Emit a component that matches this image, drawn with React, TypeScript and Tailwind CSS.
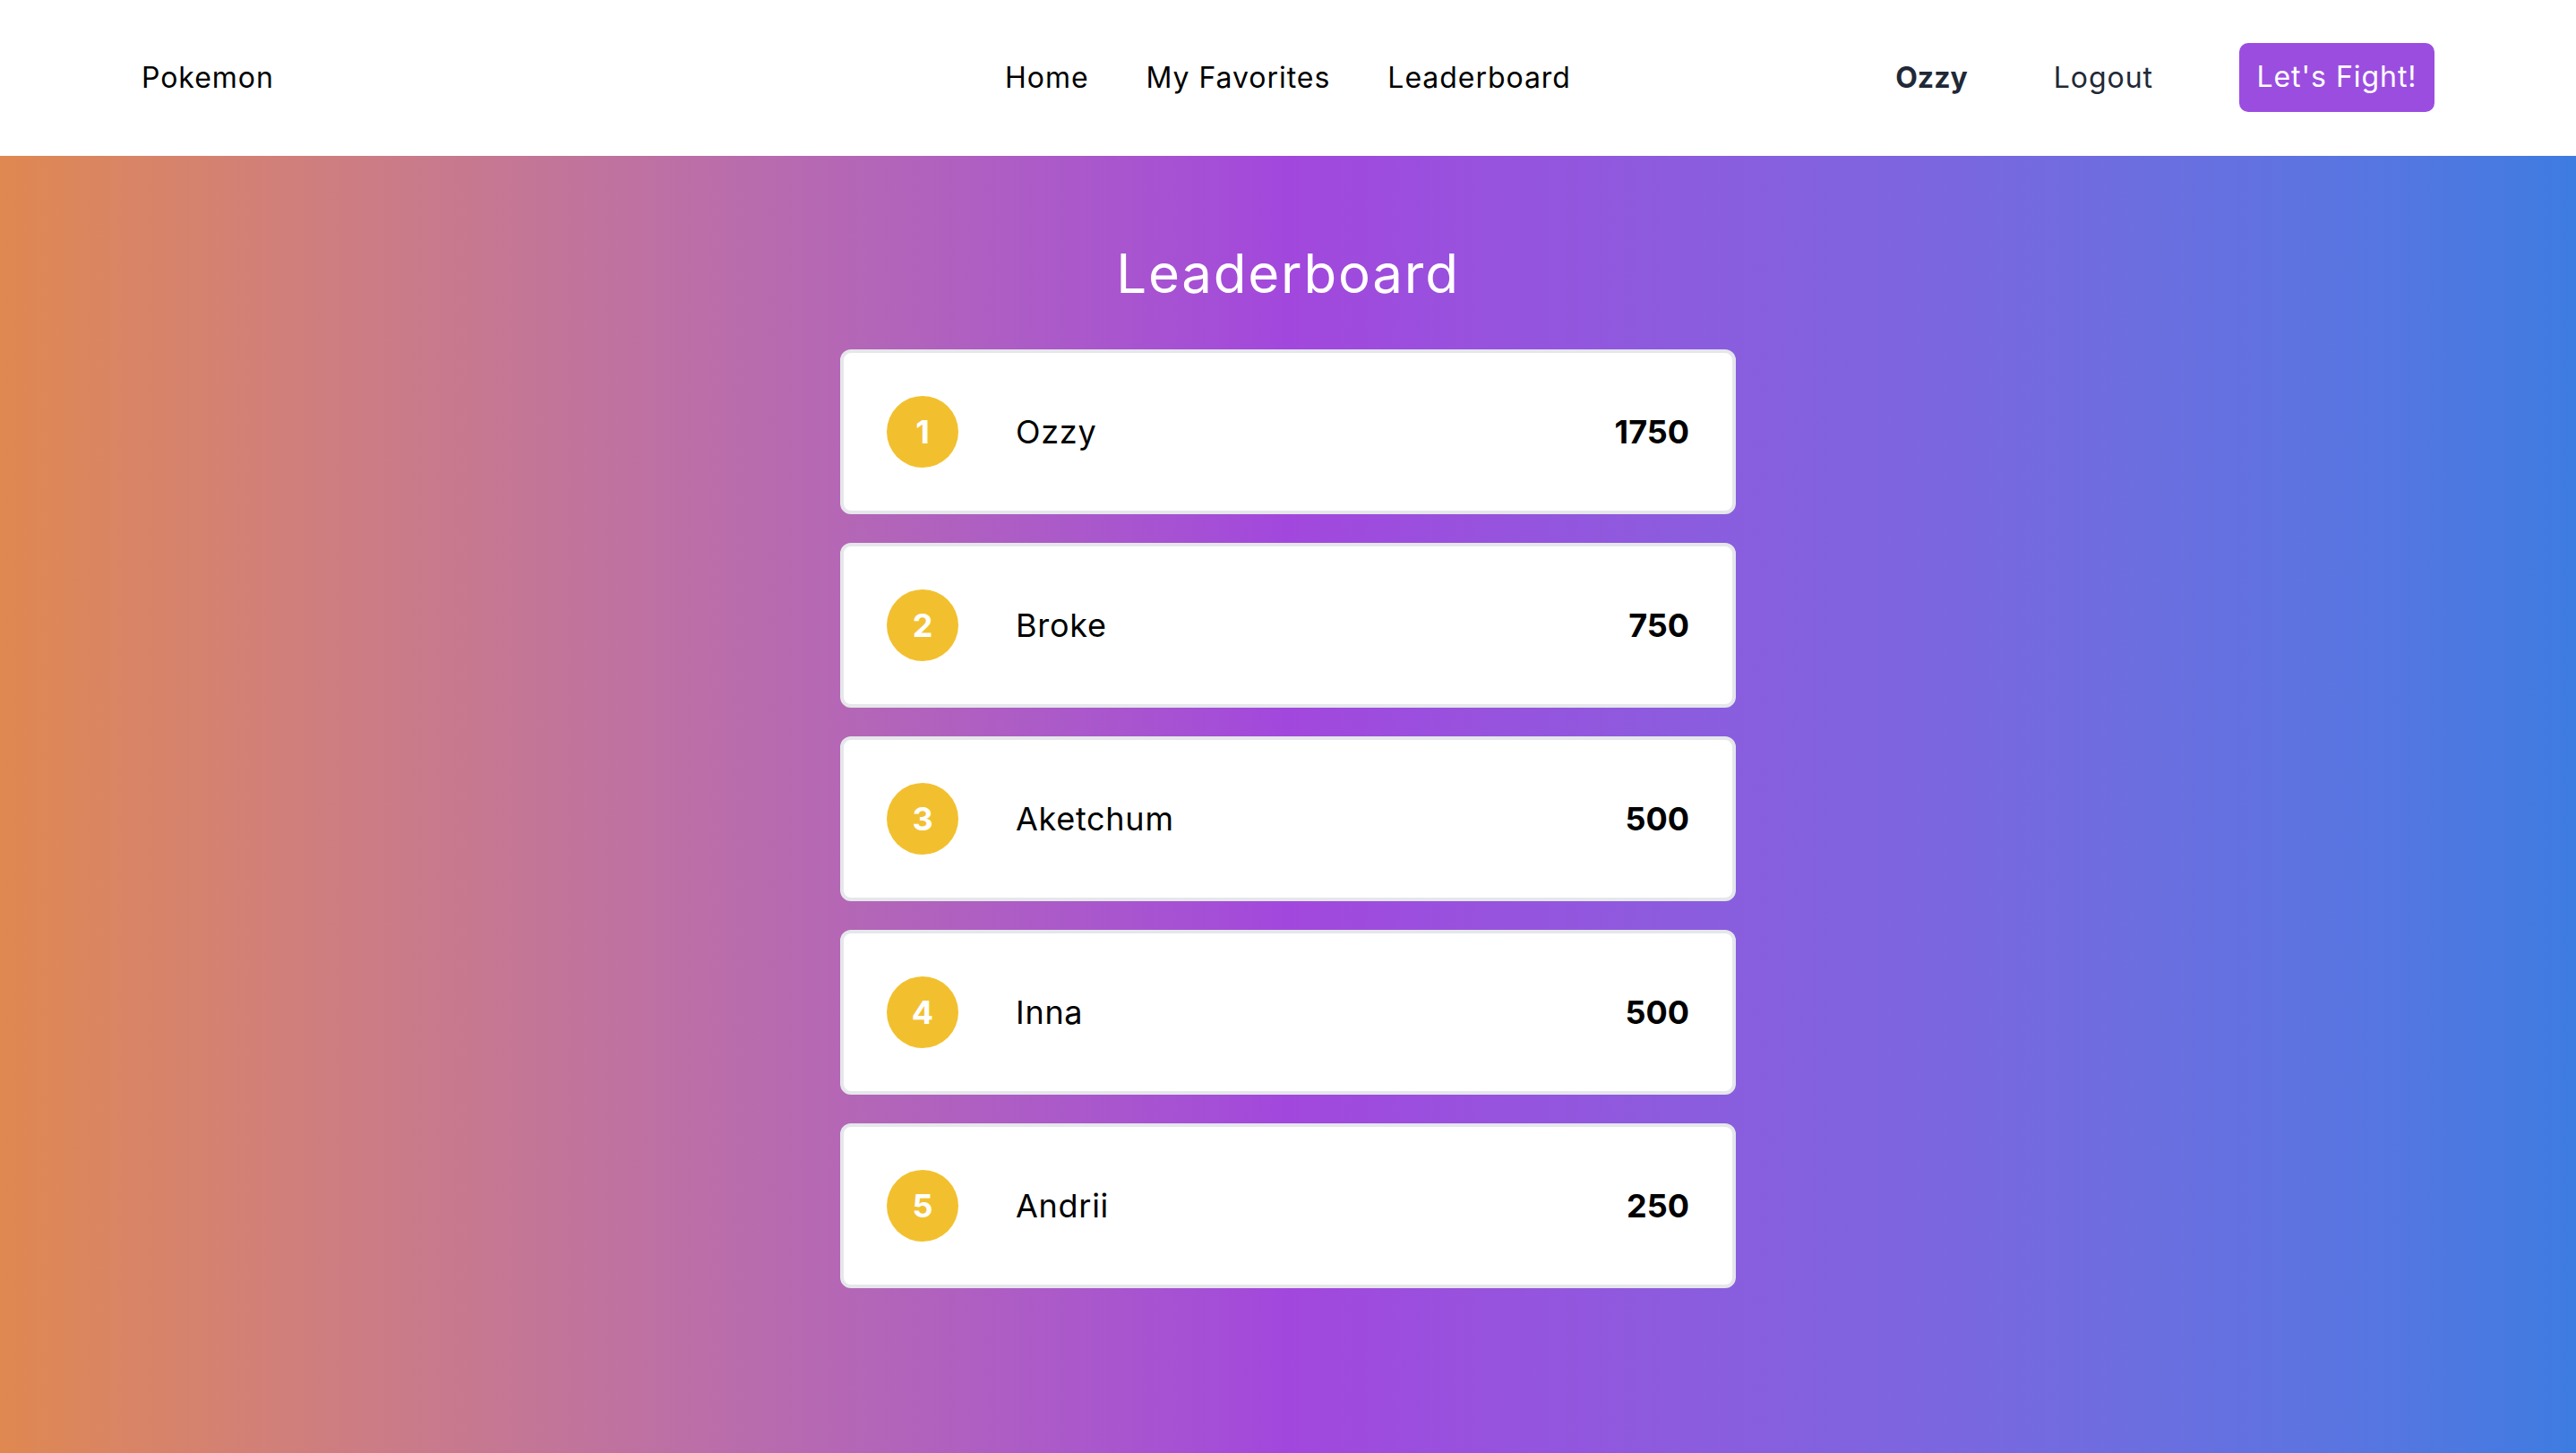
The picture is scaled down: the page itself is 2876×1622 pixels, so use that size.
const players = [
  { rank: 1, name: 'Ozzy', score: 1750 },
  { rank: 2, name: 'Broke', score: 750 },
  { rank: 3, name: 'Aketchum', score: 500 },
  { rank: 4, name: 'Inna', score: 500 },
  { rank: 5, name: 'Andrii', score: 250 },
]

const font = "font-['Inter','Open_Sans',sans-serif]"

function Navbar() {
  return (
    <header className="h-[174px] bg-white">
      <nav className="mx-auto grid h-full max-w-[2560px] grid-cols-3 items-center text-[32px] leading-none tracking-[0.03em]">
        <a href="#" className="justify-self-start text-black">
          Pokemon
        </a>
        <div className="flex items-center justify-center gap-[64px] text-black">
          <a href="#">Home</a>
          <a href="#">My Favorites</a>
          <a href="#">Leaderboard</a>
        </div>
        <div className="flex items-center justify-end gap-[96px] text-[#1f2937]">
          <span className="font-bold tracking-normal">Ozzy</span>
          <a href="#">Logout</a>
          <button className="-mt-[2px] flex h-[77px] w-[218px] items-center justify-center rounded-[10px] bg-[#9b4de0] text-white">
            Let's Fight!
          </button>
        </div>
      </nav>
    </header>
  )
}

function PlayerRow({ rank, name, score }: { rank: number; name: string; score: number }) {
  return (
    <li className="flex items-center rounded-[12px] border-[4px] border-[#e5e7eb] bg-white p-[48px]">
      <div className="flex h-[80px] w-[80px] items-center justify-center rounded-full bg-[#f2c02f] text-[36px] font-bold text-white">
        {rank}
      </div>
      <span className="ml-[64px] flex-1 text-[36px] tracking-[0.02em] text-black">{name}</span>
      <span className="text-[36px] font-bold text-black">{score}</span>
    </li>
  )
}

export default function App() {
  return (
    <div className={`min-h-[1622px] ${font}`}>
      <Navbar />
      <main className="flex min-h-[1448px] flex-col items-center bg-linear-to-r from-[#e08850] via-[#a247dd] to-[#3d7ce1] pt-[101px]">
        <h1 className="mb-[55px] text-[60px] leading-none tracking-[0.03em] text-white">Leaderboard</h1>
        <ul className="flex w-[1000px] flex-col gap-[32px]">
          {players.map(p => (
            <PlayerRow key={p.rank} {...p} />
          ))}
        </ul>
      </main>
    </div>
  )
}
